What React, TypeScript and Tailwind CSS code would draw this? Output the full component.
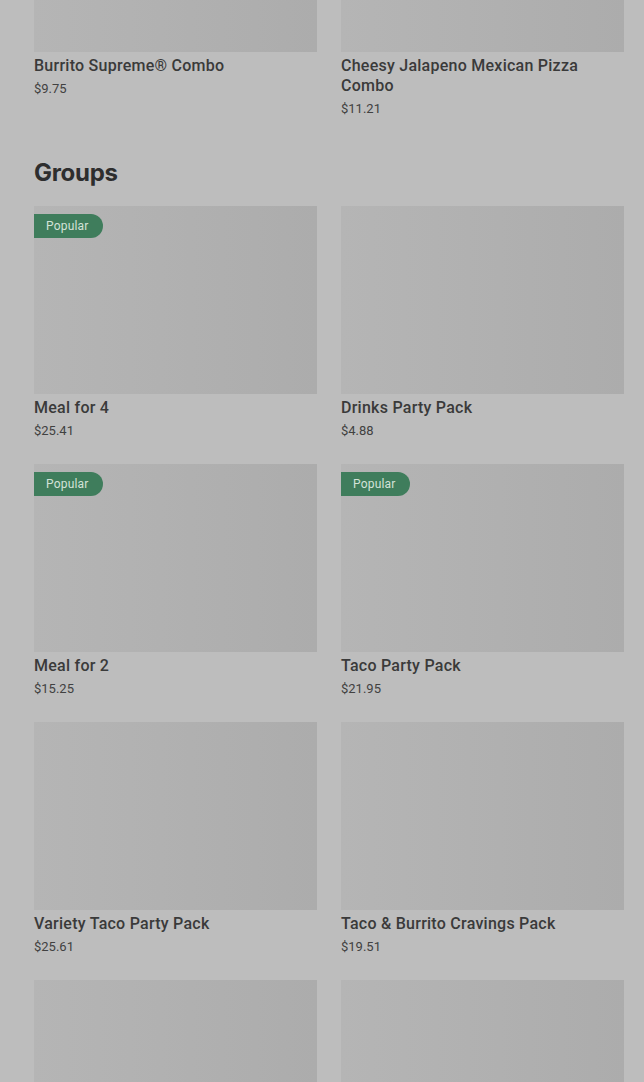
type Item = { name: string; price: string; popular?: boolean };

const groups: Item[] = [
  { name: "Meal for 4", price: "$25.41", popular: true },
  { name: "Drinks Party Pack", price: "$4.88" },
  { name: "Meal for 2", price: "$15.25", popular: true },
  { name: "Taco Party Pack", price: "$21.95", popular: true },
  { name: "Variety Taco Party Pack", price: "$25.61" },
  { name: "Taco & Burrito Cravings Pack", price: "$19.51" },
  { name: "", price: "" },
  { name: "", price: "" },
];

function Card({ item, imgClass }: { item: Item; imgClass: string }) {
  return (
    <div className="flex flex-col">
      <div className={`relative w-full bg-gradient-to-r from-[#b5b5b5] to-[#acacac] ${imgClass}`}>
        {item.popular && (
          <span className="absolute left-0 top-2 h-6 pl-3 pr-[14px] rounded-r-full bg-[#3f7d5c] text-[#d3e2d8] text-[12px] leading-6 tracking-[0.2px]">
            Popular
          </span>
        )}
      </div>
      {item.name && (
        <>
          <p className="mt-1 text-[16px] leading-5 font-medium tracking-[0.25px] text-[#3a3a3a]">{item.name}</p>
          <p className="mt-[3px] text-[13px] leading-5 text-[#414141]">{item.price}</p>
        </>
      )}
    </div>
  );
}

export default function App() {
  return (
    <div
      className="h-[1082px] overflow-hidden bg-[#bdbdbd] pl-[34px] pr-[20px]"
      style={{ fontFamily: "Roboto, 'Liberation Sans', sans-serif" }}
    >
      <div className="grid grid-cols-2 gap-x-6">
        <Card item={{ name: "Burrito Supreme® Combo", price: "$9.75" }} imgClass="h-[52px]" />
        <Card item={{ name: "Cheesy Jalapeno Mexican Pizza Combo", price: "$11.21" }} imgClass="h-[52px]" />
      </div>

      <h2
        className="mt-[38px] mb-[17px] text-[24px] leading-8 font-bold text-[#2e2e2e] tracking-[-0.3px]"
        style={{ fontFamily: "Inter, Roboto, sans-serif" }}
      >
        Groups
      </h2>

      <div className="grid grid-cols-2 gap-x-6 gap-y-[23px]">
        {groups.map((g, i) => (
          <Card key={i} item={g} imgClass="h-[188px]" />
        ))}
      </div>
    </div>
  );
}
